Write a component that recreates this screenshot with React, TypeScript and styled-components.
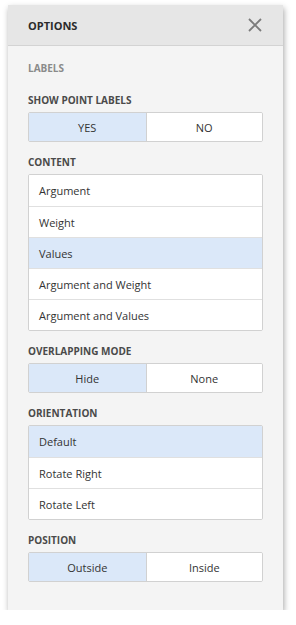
import React, { useState } from "react";
import styled, { createGlobalStyle } from "styled-components";

const GlobalStyle = createGlobalStyle`
  body {
    margin: 0;
    background: #ffffff;
    font-family: "Open Sans", "Noto Sans", sans-serif;
  }
`;

const Panel = styled("div")`
  margin: 5px 0 0 8px;
  width: 275px;
  background: #f4f4f4;
  box-shadow: 1px 3px 6px rgba(0, 0, 0, 0.35);
`;

const Header = styled("div")`
  display: flex;
  align-items: center;
  justify-content: space-between;
  height: 40px;
  padding: 0 20px;
  background: #e6e6e6;
  border-bottom: 1px solid #d3d3d3;
`;

const Title = styled("div")`
  font-size: 11px;
  font-weight: 700;
  color: #2b2b2b;
`;

const CloseButton = styled("button")`
  display: flex;
  padding: 0;
  margin-right: 1px;
  border: none;
  background: none;
  cursor: pointer;
`;

const Body = styled("div")`
  display: flex;
  flex-direction: column;
  gap: 12px;
  padding: 14px 20px 28px;
`;

const GroupTitle = styled("div")`
  font-size: 10px;
  font-weight: 700;
  line-height: 16px;
  color: #8a8a8a;
  margin-bottom: 16px;
`;

const Section = styled("div")`
  display: flex;
  flex-direction: column;
`;

const SectionLabel = styled("div")`
  font-size: 10px;
  font-weight: 700;
  line-height: 16px;
  color: #4a4a4a;
  margin-bottom: 4px;
`;

const ButtonGroup = styled("div")`
  display: grid;
  grid-template-columns: 1fr 1fr;
  height: 28px;
  border: 1px solid #d1d1d1;
  border-radius: 2px;
  background: #ffffff;
  overflow: hidden;
`;

const GroupButton = styled("button")<{ $active: boolean }>`
  border: none;
  font-family: inherit;
  font-size: 11px;
  color: #333333;
  background: ${(p) => (p.$active ? "#dbe8f9" : "#ffffff")};
  cursor: pointer;
  & + & {
    border-left: 1px solid #d1d1d1;
  }
`;

const List = styled("div")`
  display: flex;
  flex-direction: column;
  border: 1px solid #d1d1d1;
  border-radius: 2px;
  background: #ffffff;
  overflow: hidden;
`;

const ListItem = styled("div")<{ $active: boolean }>`
  box-sizing: border-box;
  height: 31px;
  display: flex;
  align-items: center;
  padding: 0 10px;
  font-size: 11px;
  color: #333333;
  background: ${(p) => (p.$active ? "#dbe8f9" : "#ffffff")};
  cursor: pointer;
  & + & {
    border-top: 1px solid #e0e0e0;
  }
`;

const Toggle = ({
  options,
  initial,
}: {
  options: string[];
  initial: string;
}) => {
  const [value, setValue] = useState(initial);
  return (
    <ButtonGroup>
      {options.map((o) => (
        <GroupButton key={o} $active={o === value} onClick={() => setValue(o)}>
          {o}
        </GroupButton>
      ))}
    </ButtonGroup>
  );
};

const Choice = ({ items, initial }: { items: string[]; initial: string }) => {
  const [value, setValue] = useState(initial);
  return (
    <List>
      {items.map((i) => (
        <ListItem key={i} $active={i === value} onClick={() => setValue(i)}>
          {i}
        </ListItem>
      ))}
    </List>
  );
};

const App = () => (
  <>
    <GlobalStyle />
    <Panel>
      <Header>
        <Title>OPTIONS</Title>
        <CloseButton aria-label="Close">
          <svg width="14" height="14" viewBox="0 0 14 14">
            <path
              d="M1 1 L13 13 M13 1 L1 13"
              stroke="#7b7b7b"
              strokeWidth="1.8"
              fill="none"
            />
          </svg>
        </CloseButton>
      </Header>
      <Body>
        <div>
          <GroupTitle>LABELS</GroupTitle>
          <Section>
            <SectionLabel>SHOW POINT LABELS</SectionLabel>
            <Toggle options={["YES", "NO"]} initial="YES" />
          </Section>
        </div>
        <Section>
          <SectionLabel>CONTENT</SectionLabel>
          <Choice
            items={[
              "Argument",
              "Weight",
              "Values",
              "Argument and Weight",
              "Argument and Values",
            ]}
            initial="Values"
          />
        </Section>
        <Section>
          <SectionLabel>OVERLAPPING MODE</SectionLabel>
          <Toggle options={["Hide", "None"]} initial="Hide" />
        </Section>
        <Section>
          <SectionLabel>ORIENTATION</SectionLabel>
          <Choice
            items={["Default", "Rotate Right", "Rotate Left"]}
            initial="Default"
          />
        </Section>
        <Section>
          <SectionLabel>POSITION</SectionLabel>
          <Toggle options={["Outside", "Inside"]} initial="Outside" />
        </Section>
      </Body>
    </Panel>
  </>
);

export default App;
